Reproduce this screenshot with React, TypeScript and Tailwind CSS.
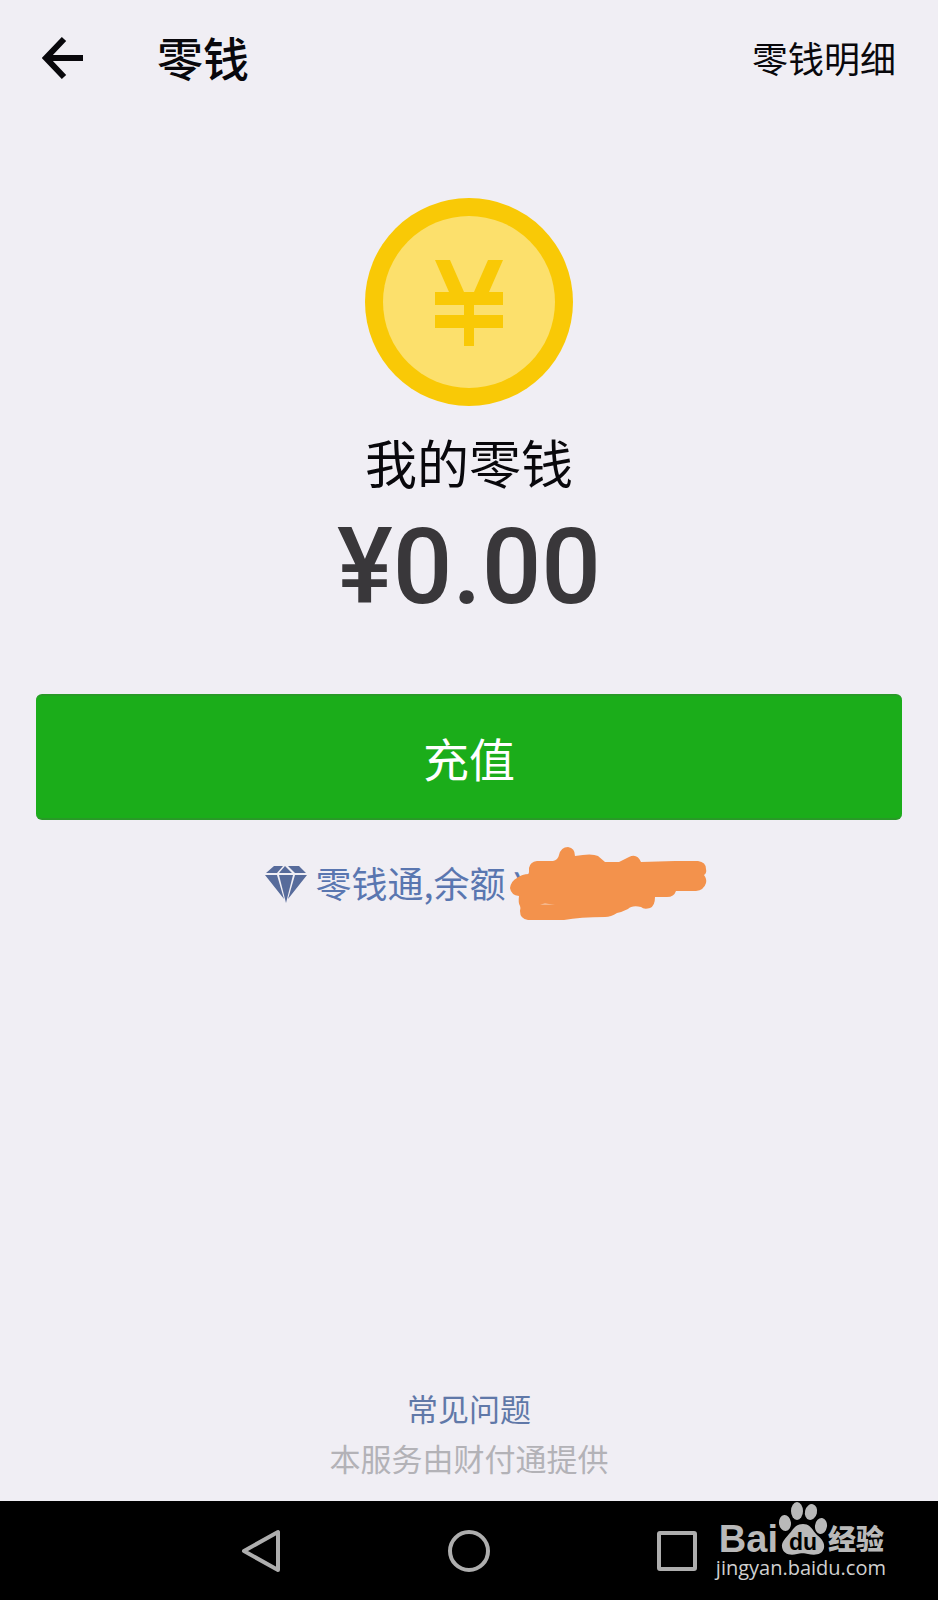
import type { ReactNode } from "react";

function BackArrow() {
  return (
    <svg className="size-11" viewBox="0 0 44 44" fill="none" stroke="currentColor" strokeWidth="6" aria-hidden>
      <path d="M41 22H5M22 3L4 22l18 19" />
    </svg>
  );
}

function Coin() {
  return (
    <svg className="size-[208px]" viewBox="0 0 208 208" aria-hidden>
      <circle cx="104" cy="104" r="104" fill="#f9c906" />
      <circle cx="104" cy="104" r="86" fill="#fce06c" />
      <path
        fill="#f9c906"
        d="M70 62H85L99 94H109L123 62H138L124 94H138V107H109V117H138V130H109V148H99V130H70V117H99V107H70V94H84Z"
      />
    </svg>
  );
}

function Diamond() {
  return (
    <svg className="mt-1 h-[38px] w-[42px] shrink-0" viewBox="0 0 42 38" fill="#576b9b" aria-hidden>
      <path d="M9 1H18L12 8H1ZM20 1L27 8H14ZM23 1H34L41 8H30Z" />
      <path d="M0 10H12L19 34ZM14 10H28L21 38ZM30 10H42L23 34Z" />
    </svg>
  );
}

// marker strokes over the hidden amount
function Scribble() {
  return (
    <svg className="absolute left-[-4px] top-[-10px] h-[76px] w-[197px]" viewBox="0 0 197 76" fill="#f3924c" aria-hidden>
      <path d="M19 22Q20 16 27 15H43Q48 14 49 9Q51 1 58 1Q65 2 65 10Q82 7 88 10L95 16H109L119 11Q127 7 131 16L165 15H188Q196 16 196 23Q197 27 194 29Q197 33 196 37Q194 44 186 45H166Q164 51 157 51H145Q145 60 140 62Q134 64 131 61Q122 59 118 63Q112 66 107 67Q101 71 95 71Q70 71 54 74H18Q10 73 10 65Q11 62 10 60Q8 57 9 50Q1 49 0 42Q1 35 7 32Q12 28 19 28Z" />
      <path d="M30 59L35 57L39 58L45 59Z" fill="#f5b68a" />
    </svg>
  );
}

function Paw() {
  return (
    <svg className="h-[54px] w-[50px] shrink-0" viewBox="0 0 50 54" fill="#b9b9b9" aria-hidden>
      <ellipse cx="7" cy="21" rx="6" ry="8" transform="rotate(-6 7 21)" />
      <ellipse cx="19" cy="9" rx="6" ry="9" />
      <ellipse cx="33" cy="10" rx="6" ry="8" transform="rotate(14 33 10)" />
      <ellipse cx="43" cy="24" rx="6" ry="8" transform="rotate(8 43 24)" />
      <path d="M25 22C33 22 34 28 39 33C44 37 47 41 46 46C44 54 35 53 30 52C27 51 22 51 19 52C12 54 5 52 4 45C3 40 8 36 11 32C15 28 17 22 25 22Z" />
      <text x="25" y="48" textAnchor="middle" fill="#000" fontFamily="Liberation Sans, sans-serif" fontWeight="700" fontSize="23">
        du
      </text>
    </svg>
  );
}

function NavButton({ label, children }: { label: string; children: ReactNode }) {
  return (
    <button aria-label={label} className="flex size-12 items-center justify-center">
      <svg className="size-12 stroke-[#aeaeae]" viewBox="0 0 48 48" fill="none" strokeWidth="4" strokeLinejoin="round" aria-hidden>
        {children}
      </svg>
    </button>
  );
}

function Watermark() {
  return (
    <div className="absolute right-[52px] bottom-5 flex flex-col text-[#b9b9b9]">
      <div className="flex items-end justify-end pr-0.5">
        <span className="font-['Liberation_Sans',sans-serif] text-[38px] font-bold leading-[34px]">Bai</span>
        <Paw />
        <span className="text-[28px] font-black leading-[36px]">经验</span>
      </div>
      <span className="font-['Open_Sans',sans-serif] text-xl leading-6 text-[#d0d0d0]">jingyan.baidu.com</span>
    </div>
  );
}

export default function App() {
  return (
    <div className="flex min-h-screen flex-col bg-[#f0eef4] font-['Noto_Sans_CJK_SC',sans-serif] text-[#09080c]">
      <header className="flex h-[116px] items-center justify-between px-[42px]">
        <div className="flex items-center gap-[71px]">
          <button aria-label="返回">
            <BackArrow />
          </button>
          <h1 className="pb-1 text-[46px] font-medium leading-none">零钱</h1>
        </div>
        <a href="#detail" className="pb-0.5 text-[36px] leading-none">零钱明细</a>
      </header>

      <main className="flex flex-1 flex-col items-center px-9 pt-[82px]">
        <Coin />
        <p className="mt-[26px] text-[52px] leading-[60px]">我的零钱</p>
        <p className="mt-9 font-['Roboto',sans-serif] text-[105px] font-medium leading-[80px] text-[#39373a]">¥0.00</p>
        <button className="mt-[86px] h-[126px] w-full rounded-md border-y-2 border-[#289a27] bg-[#1bad1a] text-[46px] text-white">
          充值
        </button>
        <a href="#lqt" className="mt-9 flex items-center gap-2 text-[36px] leading-[52px] text-[#5a76b0]">
          <Diamond />
          <span>零钱通,余额</span>
          <span className="relative w-[159px]">
            ¥
            <Scribble />
          </span>
        </a>
      </main>

      <footer className="flex flex-col items-center pb-[18px] text-[31px] leading-[50px]">
        <a href="#faq" className="text-[#6078a8]">常见问题</a>
        <p className="text-[#b3b2b7]">本服务由财付通提供</p>
      </footer>

      <nav className="relative flex h-[99px] items-center justify-center gap-40 bg-black">
        <NavButton label="返回上一页">
          <path d="M7 24L41 5V43Z" />
        </NavButton>
        <NavButton label="主屏幕">
          <circle cx="24" cy="24" r="19" />
        </NavButton>
        <NavButton label="最近任务">
          <rect x="6" y="6" width="36" height="36" rx="1" />
        </NavButton>
        <Watermark />
      </nav>
    </div>
  );
}
